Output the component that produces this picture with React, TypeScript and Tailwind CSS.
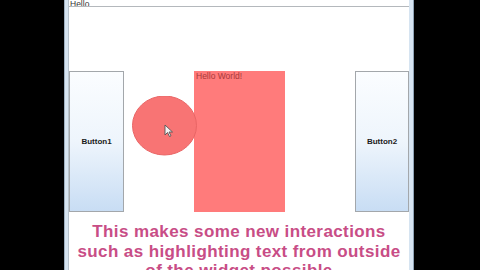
import React from "react";

function Btn({ label }: { label: string }) {
  return (
    <div className="h-full flex items-center justify-center border border-[#a3a7ab] bg-gradient-to-b from-[#fbfdff] via-[#eef5fc] to-[#c8ddf4]">
      <span className="text-[8px] font-bold text-[#1a1a1a]" style={{ fontFamily: '"Liberation Sans", Arial, sans-serif' }}>
        {label}
      </span>
    </div>
  );
}

export default function App() {
  return (
    <div className="w-[480px] h-[270px] bg-black flex overflow-hidden" style={{ fontFamily: '"Liberation Sans", Arial, sans-serif' }}>
      <div className="w-[64px] shrink-0" />
      <div className="w-[350px] shrink-0 flex bg-[#d6e4f1] border-l border-[#9fb0c0] border-r border-r-[#8fa3b5]">
        <div className="w-[3px] shrink-0" />
        <div className="w-[341px] shrink-0 bg-white border-l border-[#b7c2cc] flex flex-col relative">
          {/* text field */}
          <div className="h-[7px] shrink-0 border-b border-[#b4b8bc] overflow-hidden flex items-end pl-[1px]">
            <span className="text-[8.5px] leading-[8px] text-[#333] -mb-[2px]">Hello</span>
          </div>
          <div className="h-[64px] shrink-0" />
          {/* row */}
          <div className="h-[141px] shrink-0 flex">
            <div className="w-[55px] shrink-0"><Btn label="Button1" /></div>
            <div className="w-[70px] shrink-0" />
            <div className="w-[91px] shrink-0 bg-[#ff7b7b] pl-[2px] pt-[1px]">
              <span className="text-[8.5px] leading-[8px] text-[#a83a3a] block">Hello World!</span>
            </div>
            <div className="w-[70px] shrink-0" />
            <div className="w-[54px] shrink-0"><Btn label="Button2" /></div>
          </div>
          {/* caption */}
          <div className="shrink-0 pt-[10px] text-center font-bold text-[17px] leading-[19.5px] tracking-[0.4px] text-[#c84d86] whitespace-nowrap">
            <div>This makes some new interactions</div>
            <div>such as highlighting text from outside</div>
            <div>of the widget possible</div>
          </div>
          {/* circle overlay */}
          <svg className="absolute left-[63px] top-[96px]" width="68" height="62" viewBox="0 0 68 62">
            <ellipse cx="32.5" cy="29.5" rx="32" ry="29.5" fill="#f87474" stroke="#e96565" strokeWidth="1" />
          </svg>
          {/* cursor */}
          <svg className="absolute left-[95px] top-[124px]" width="10" height="14" viewBox="0 0 10 14">
            <path d="M1 1 L1 11 L3.5 8.5 L5.5 12.5 L7 11.8 L5 8 L8.5 8 Z" fill="#f3f3f3" stroke="#555" strokeWidth="0.9" strokeLinejoin="round" />
          </svg>
        </div>
      </div>
    </div>
  );
}
